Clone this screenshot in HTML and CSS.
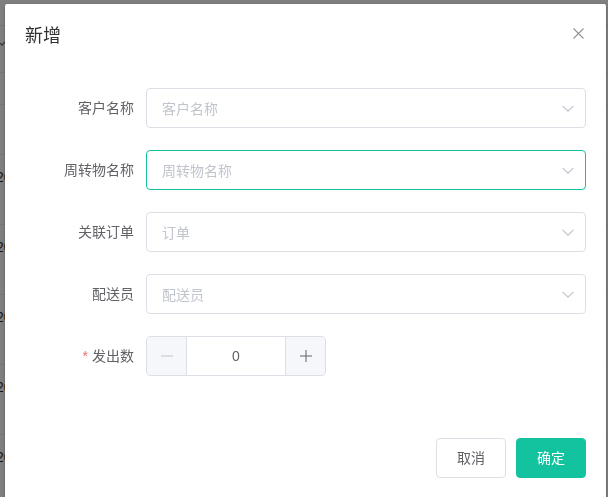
FILE: index.html
```html
<!DOCTYPE html>
<html lang="zh-CN">
<head>
<meta charset="utf-8">
<title>新增</title>
<link rel="stylesheet" href="styles.css">
</head>
<body>
<div class="page">
  <div class="bg-row bg-head"></div>
  <div class="bg-row bg-head2"><span class="bg-chev"></span></div>
  <div class="bg-row bg-thin"></div>
  <div class="bg-row bg-mid"></div>
  <div class="bg-row"><span class="bg-text">2023</span></div>
  <div class="bg-row"><span class="bg-text">2023</span></div>
  <div class="bg-row"><span class="bg-text">2023</span></div>
  <div class="bg-row"><span class="bg-text">2023</span></div>
  <div class="bg-row"><span class="bg-text">2023</span></div>
</div>
<div class="overlay"></div>
<div class="dialog">
  <div class="dialog-header">
    <span class="dialog-title">新增</span>
    <button class="dialog-close" aria-label="关闭">
      <svg width="11" height="11" viewBox="0 0 11 11"><path d="M0.5 0.5 L10.5 10.5 M10.5 0.5 L0.5 10.5" stroke="#909399" stroke-width="1.1" fill="none"/></svg>
    </button>
  </div>
  <div class="dialog-body">
    <form class="form">
      <div class="form-item">
        <label class="form-label">客户名称</label>
        <div class="select">
          <span class="placeholder">客户名称</span>
          <span class="suffix"><svg width="12" height="7" viewBox="0 0 12 7"><path d="M0.5 0.8 L6 6.2 L11.5 0.8" stroke="#c0c4cc" stroke-width="1.1" fill="none"/></svg></span>
        </div>
      </div>
      <div class="form-item">
        <label class="form-label">周转物名称</label>
        <div class="select is-focus">
          <span class="placeholder">周转物名称</span>
          <span class="suffix"><svg width="12" height="7" viewBox="0 0 12 7"><path d="M0.5 0.8 L6 6.2 L11.5 0.8" stroke="#c0c4cc" stroke-width="1.1" fill="none"/></svg></span>
        </div>
      </div>
      <div class="form-item">
        <label class="form-label">关联订单</label>
        <div class="select">
          <span class="placeholder">订单</span>
          <span class="suffix"><svg width="12" height="7" viewBox="0 0 12 7"><path d="M0.5 0.8 L6 6.2 L11.5 0.8" stroke="#c0c4cc" stroke-width="1.1" fill="none"/></svg></span>
        </div>
      </div>
      <div class="form-item">
        <label class="form-label">配送员</label>
        <div class="select">
          <span class="placeholder">配送员</span>
          <span class="suffix"><svg width="12" height="7" viewBox="0 0 12 7"><path d="M0.5 0.8 L6 6.2 L11.5 0.8" stroke="#c0c4cc" stroke-width="1.1" fill="none"/></svg></span>
        </div>
      </div>
      <div class="form-item">
        <label class="form-label"><span class="required">*</span>发出数</label>
        <div class="input-number">
          <span class="num-btn num-dec"><svg width="12" height="2" viewBox="0 0 12 2"><path d="M0 1 H12" stroke="#c0c4cc" stroke-width="1"/></svg></span>
          <span class="num-value">0</span>
          <span class="num-btn num-inc"><svg width="12" height="12" viewBox="0 0 12 12"><path d="M0 6 H12 M6 0 V12" stroke="#606266" stroke-width="1"/></svg></span>
        </div>
      </div>
    </form>
  </div>
  <div class="dialog-footer">
    <button class="btn">取消</button>
    <button class="btn btn-primary">确定</button>
  </div>
</div>
</body>
</html>
```

FILE: styles.css
```css
* { box-sizing: border-box; }
html, body { margin: 0; padding: 0; }
body {
  width: 608px;
  height: 497px;
  overflow: hidden;
  font-family: "Helvetica Neue", Helvetica, "Liberation Sans", "Noto Sans CJK SC", sans-serif;
  font-size: 14px;
  background: #ffffff;
}

/* background page behind the mask */
.page {
  display: flex;
  flex-direction: column;
}
.bg-row {
  height: 70px;
  flex: none;
  border-bottom: 1px solid #ebeef5;
  overflow: hidden;
}
.bg-head { height: 26px; border-bottom: 1px solid #e4e7ed; }
.bg-head2 { height: 47px; }
.bg-thin { height: 32px; }
.bg-mid { height: 50px; }
.bg-chev {
  display: block;
  width: 8px; height: 8px;
  border-right: 1px solid #606266;
  border-bottom: 1px solid #606266;
  transform: rotate(45deg);
  margin: 10px 0 0 -2px;
}
.bg-text {
  display: block;
  margin: 13px 0 0 -4px;
  color: #303133;
  font-size: 14px;
  line-height: 18px;
}

.overlay {
  position: fixed;
  inset: 0;
  background: rgba(0, 0, 0, 0.5);
}

.dialog {
  position: absolute;
  top: 4px;
  left: 5px;
  width: 601px;
  height: 520px;
  background: #fff;
  border-radius: 2px;
  box-shadow: 0 1px 3px rgba(0, 0, 0, 0.3);
}
.dialog-header {
  padding: 20px 20px 10px;
  position: relative;
}
.dialog-title {
  display: block;
  font-size: 18px;
  line-height: 24px;
  color: #303133;
}
.dialog-close {
  position: absolute;
  top: 24px;
  right: 22px;
  padding: 0;
  border: 0;
  background: transparent;
  width: 11px;
  height: 11px;
  display: flex;
}

.dialog-body {
  padding: 30px 20px;
}
.form { margin: 0; }
.form-item {
  display: flex;
  align-items: center;
  margin-bottom: 22px;
}
.form-label {
  width: 121px;
  flex: none;
  text-align: right;
  padding-right: 12px;
  color: #606266;
  font-size: 14px;
  line-height: 40px;
}
.required {
  color: #f56c6c;
  margin-right: 4px;
}
.select {
  flex: 1;
  height: 40px;
  border: 1px solid #dcdfe6;
  border-radius: 4px;
  display: flex;
  align-items: center;
  padding-left: 15px;
}
.select.is-focus { border-color: #13c29f; }
.placeholder {
  flex: 1;
  color: #c0c4cc;
  font-size: 14px;
}
.suffix {
  width: 25px;
  margin-right: 5px;
  display: flex;
  justify-content: center;
  align-items: center;
}

.input-number {
  width: 180px;
  height: 40px;
  border: 1px solid #dcdfe6;
  border-radius: 4px;
  display: flex;
  overflow: hidden;
}
.num-btn {
  width: 40px;
  flex: none;
  background: #f5f7fa;
  display: flex;
  align-items: center;
  justify-content: center;
}
.num-dec { border-right: 1px solid #dcdfe6; }
.num-inc { border-left: 1px solid #dcdfe6; }
.num-value {
  flex: 1;
  text-align: center;
  line-height: 38px;
  color: #606266;
  font-size: 14px;
}

.dialog-footer {
  padding: 10px 20px 20px;
  display: flex;
  justify-content: flex-end;
  gap: 10px;
}
.btn {
  font-family: inherit;
  font-size: 14px;
  line-height: 14px;
  padding: 12px 20px;
  border: 1px solid #dcdfe6;
  border-radius: 4px;
  background: #fff;
  color: #606266;
  width: 70px;
  height: 40px;
}
.btn-primary {
  background: #13c29f;
  border-color: #13c29f;
  color: #fff;
}
```
